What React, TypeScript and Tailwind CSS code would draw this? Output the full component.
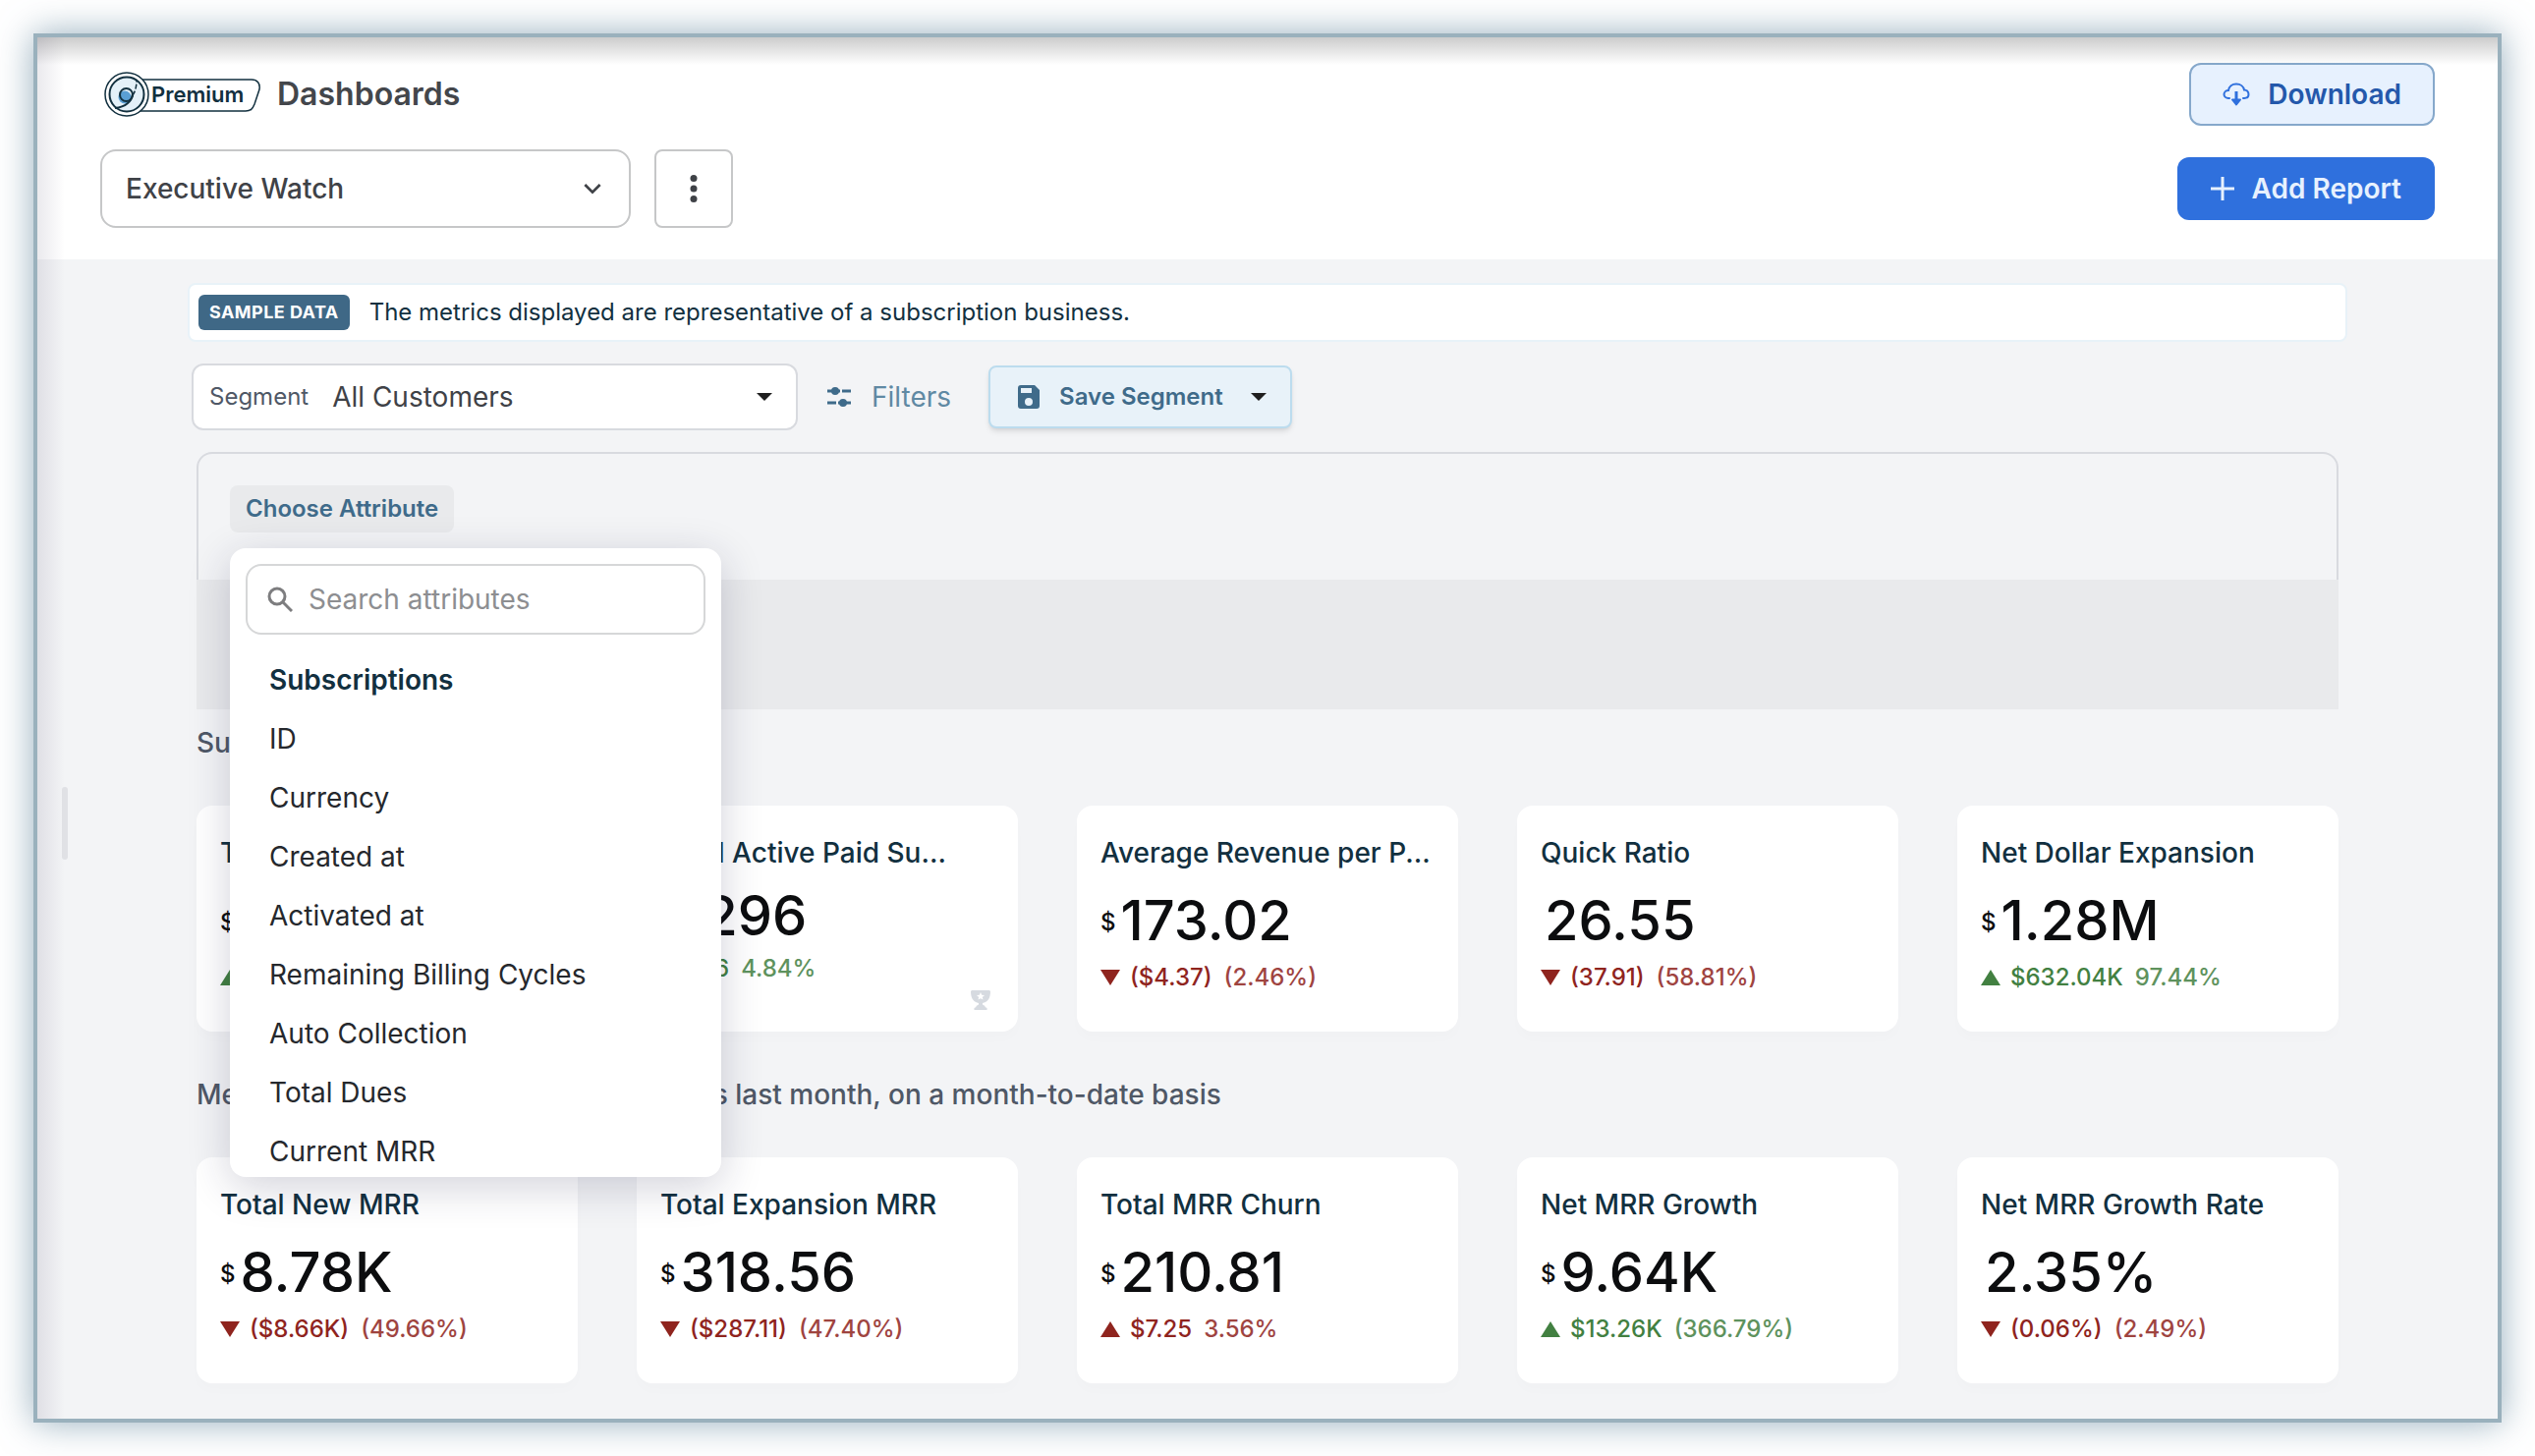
import React, { useState } from 'react';
import clsx from 'clsx';

type Tone = 'good' | 'bad';

interface Metric {
  title: string;
  value: string;
  currency?: boolean;
  change: string;
  percent: string;
  direction: 'up' | 'down';
  tone: Tone;
  goal?: boolean;
}

const subscriptionMetrics: Metric[] = [
  { title: 'Total MRR', value: '51.21K', currency: true, change: '$1.18K', percent: '2.35%', direction: 'up', tone: 'good' },
  { title: 'Total Active Paid Su...', value: '1,296', change: '136', percent: '4.84%', direction: 'up', tone: 'good', goal: true },
  { title: 'Average Revenue per P...', value: '173.02', currency: true, change: '($4.37)', percent: '(2.46%)', direction: 'down', tone: 'bad' },
  { title: 'Quick Ratio', value: '26.55', change: '(37.91)', percent: '(58.81%)', direction: 'down', tone: 'bad' },
  { title: 'Net Dollar Expansion', value: '1.28M', currency: true, change: '$632.04K', percent: '97.44%', direction: 'up', tone: 'good' },
];

const monthMetrics: Metric[] = [
  { title: 'Total New MRR', value: '8.78K', currency: true, change: '($8.66K)', percent: '(49.66%)', direction: 'down', tone: 'bad' },
  { title: 'Total Expansion MRR', value: '318.56', currency: true, change: '($287.11)', percent: '(47.40%)', direction: 'down', tone: 'bad' },
  { title: 'Total MRR Churn', value: '210.81', currency: true, change: '$7.25', percent: '3.56%', direction: 'up', tone: 'bad' },
  { title: 'Net MRR Growth', value: '9.64K', currency: true, change: '$13.26K', percent: '(366.79%)', direction: 'up', tone: 'good' },
  { title: 'Net MRR Growth Rate', value: '2.35%', change: '(0.06%)', percent: '(2.49%)', direction: 'down', tone: 'bad' },
];

const attributes = [
  'ID',
  'Currency',
  'Created at',
  'Activated at',
  'Remaining Billing Cycles',
  'Auto Collection',
  'Total Dues',
  'Current MRR',
];

const Caret: React.FC<{ className?: string }> = ({ className }) => (
  <svg viewBox="0 0 16 8" className={clsx('h-2 w-4 shrink-0', className)} fill="#1f1f1f" aria-hidden="true">
    <path d="M0 0h16L8 8z" />
  </svg>
);

const PremiumBadge = () => (
  <div className="relative flex h-12 w-[160px] items-center pl-12">
    <svg viewBox="0 0 160 48" className="absolute inset-0 h-12 w-[160px]" fill="none" aria-hidden="true">
      <path
        d="M38 9H150C156 9 159 13 158 19L153 34C151 39 149 41 144 41H36"
        stroke="#12303f"
        strokeWidth="1.5"
      />
      <circle cx="23" cy="24" r="22" fill="#fff" stroke="#12303f" strokeWidth="1.5" />
      <circle cx="23" cy="24" r="17.5" fill="#e4f0f8" stroke="#12303f" strokeWidth="2" />
      <circle cx="21" cy="27" r="6.5" fill="#5a9fd4" />
      <circle cx="22.5" cy="24.5" r="6.5" stroke="#12303f" strokeWidth="2" />
      <path d="M29 24C28 31 22 37 11 38" stroke="#12303f" strokeWidth="2" />
      <path d="M29 25C32 21 33 15 33 10" stroke="#12303f" strokeWidth="1.5" strokeDasharray="5 2" />
    </svg>
    <span className="relative text-[22px] leading-8 font-semibold text-[#12303f]">Premium</span>
  </div>
);

const PageHeader = () => (
  <header className="flex flex-col gap-6 bg-white px-16 pt-[26px] pb-8">
    <div className="flex h-16 items-center justify-between">
      <div className="flex items-center gap-4 pl-1">
        <PremiumBadge />
        <h1 className="text-[32px] leading-10 font-semibold text-[#43464b]">Dashboards</h1>
      </div>
      <button
        type="button"
        className="flex h-16 items-center gap-[18px] rounded-xl border-2 border-[#86a8cb] bg-[#e7f1fe] px-8 text-[28px] font-semibold text-[#2458ab]"
      >
        <svg viewBox="0 0 28 24" className="h-6 w-7" fill="none" stroke="#2f70dd" strokeWidth="2" aria-hidden="true">
          <path d="M7 16H6C3.500 16 1.500 14.200 1.500 12S3.500 8 6 8C6.500 4 9.800 1.500 14 1.500S21.500 4 22 7.500C24.500 7.500 26.500 9.500 26.500 12S24.500 16 22 16H21" strokeLinecap="round" />
          <path d="M14 9v8" strokeWidth="3" />
          <path d="M10 17.500h8l-4 5z" fill="#2f70dd" strokeLinejoin="round" />
        </svg>
        Download
      </button>
    </div>
    <div className="flex h-20 items-center justify-between">
      <div className="flex items-center gap-6">
        <div className="relative w-[540px]">
          <select
            aria-label="Dashboard"
            className="h-20 w-full appearance-none rounded-2xl border-2 border-[#c6c7c8] bg-white px-6 text-[28px] font-medium text-[#3f4247]"
          >
            <option>Executive Watch</option>
          </select>
          <svg viewBox="0 0 20 12" className="pointer-events-none absolute top-[34px] right-[30px] h-3 w-[18px]" fill="none" stroke="#3f4247" strokeWidth="3" aria-hidden="true">
            <path d="M1.500 1.500L10 10l8.500-8.500" />
          </svg>
        </div>
        <button
          type="button"
          aria-label="More options"
          className="flex h-20 w-20 items-center justify-center rounded-lg border-2 border-[#c6c7c8]"
        >
          <svg viewBox="0 0 8 28" className="h-7 w-2" fill="#3f4247" aria-hidden="true">
            <circle cx="4" cy="3.5" r="3.5" />
            <circle cx="4" cy="14" r="3.5" />
            <circle cx="4" cy="24.5" r="3.5" />
          </svg>
        </button>
      </div>
      <button
        type="button"
        className="flex h-16 items-center gap-[18px] rounded-xl bg-[#2f70dd] px-[34px] text-[28px] font-semibold text-[#e7f1fe]"
      >
        <svg viewBox="0 0 24 24" className="h-6 w-6" stroke="#e7f1fe" strokeWidth="3" aria-hidden="true">
          <path d="M12 0v24M0 12h24" />
        </svg>
        Add Report
      </button>
    </div>
  </header>
);

const SegmentBar = () => (
  <div className="flex items-center pl-1">
    <div className="relative flex h-[68px] w-[617px] items-center rounded-xl border-2 border-[#d8dadf] bg-white">
      <label htmlFor="segment" className="pl-4 text-2xl text-[#4f5866]">
        Segment
      </label>
      <select id="segment" className="h-full flex-1 appearance-none bg-transparent pl-6 text-[28px] text-[#3f4247]">
        <option>All Customers</option>
      </select>
      <Caret className="pointer-events-none absolute right-6" />
    </div>
    <button type="button" className="ml-[30px] flex items-center gap-[21px] text-[28px] text-[#6089a3]">
      <svg viewBox="0 0 24 24" className="h-6 w-6" fill="#3f6b8a" stroke="#3f6b8a" strokeWidth="3" aria-hidden="true">
        <path d="M0 6h13M15 6h9M0 18h9M11 18h13" />
        <circle cx="8" cy="6" r="3" strokeWidth="2" />
        <circle cx="16" cy="18" r="3" strokeWidth="2" />
      </svg>
      Filters
    </button>
    <button
      type="button"
      className="ml-[38px] flex h-16 items-center rounded-lg border-2 border-[#bcdcee] bg-[#e8f2f9] px-6 text-2xl font-semibold text-[#3f6b8a] shadow-md"
    >
      <svg viewBox="0 0 22 24" className="ml-1 h-6 w-[22px]" fill="#3f6b8a" aria-hidden="true">
        <path
          fillRule="evenodd"
          d="M3 0h14l5 5v16a3 3 0 0 1-3 3H3a3 3 0 0 1-3-3V3a3 3 0 0 1 3-3zM3 3v5h11V3zM11 13a4 4 0 1 0 0 8 4 4 0 0 0 0-8z"
        />
      </svg>
      <span className="ml-5">Save Segment</span>
      <Caret className="ml-7" />
    </button>
  </div>
);

const AttributeMenu = () => {
  const [query, setQuery] = useState('');
  const shown = attributes.filter((name) => name.toLowerCase().includes(query.toLowerCase()));

  return (
    <div className="absolute top-full left-0 z-10 mt-4 h-[640px] w-[500px] overflow-hidden rounded-2xl bg-white p-4 shadow-[0_10px_44px_rgba(30,30,70,0.2)]">
      <div className="flex h-[72px] items-center gap-4 rounded-2xl border-2 border-[#d6d7d8] px-5">
        <svg viewBox="0 0 26 26" className="h-[26px] w-[26px] shrink-0" fill="none" stroke="#7d7d7f" strokeWidth="3" aria-hidden="true">
          <circle cx="10" cy="10" r="8" />
          <path d="M16 16l9 9" />
        </svg>
        <input
          type="text"
          aria-label="Search attributes"
          placeholder="Search attributes"
          value={query}
          onChange={(e) => setQuery(e.target.value)}
          className="w-full min-w-0 text-[28px] outline-none placeholder:text-[#8d8e91]"
        />
      </div>
      <h3 className="mt-4 flex h-[60px] items-center px-6 text-[28px] font-semibold text-[#12303f]">Subscriptions</h3>
      <ul>
        {shown.map((name) => (
          <li key={name}>
            <button type="button" className="flex h-[60px] w-full items-center px-6 text-[28px] text-[#25282d]">
              {name}
            </button>
          </li>
        ))}
      </ul>
    </div>
  );
};

const MetricCard: React.FC<{ metric: Metric }> = ({ metric }) => (
  <article className="relative h-[230px] rounded-2xl bg-white px-6 pt-[30px] shadow-[0_8px_12px_rgba(0,0,0,0.01)]">
    <h3 className="truncate text-[28px] leading-9 font-medium text-[#12303f]">{metric.title}</h3>
    <div className={clsx('flex items-center gap-[5px] text-[#0c0d0f]', metric.goal ? 'mt-3.5' : 'mt-[19px]')}>
      {metric.currency && <span className="pt-1 text-2xl font-medium">$</span>}
      <span className={clsx('text-[56px] leading-16 font-medium', !metric.currency && 'pl-1')}>{metric.value}</span>
    </div>
    <div
      className={clsx(
        'flex items-center text-2xl leading-8 font-medium',
        metric.goal ? 'mt-1.5' : 'mt-2.5',
        metric.tone === 'good' ? 'text-[#428041]' : 'text-[#8f241e]'
      )}
    >
      <svg viewBox="0 0 20 16" className="h-4 w-5" fill="currentColor" aria-hidden="true">
        {metric.direction === 'up' ? <path d="M0 16h20L10 0z" /> : <path d="M0 0h20L10 16z" />}
      </svg>
      <span className="ml-2.5">{metric.change}</span>
      <span className="ml-3 opacity-85">{metric.percent}</span>
    </div>
    {metric.goal && (
      <svg viewBox="0 0 20 20" className="absolute right-7 bottom-[22px] h-5 w-5" fill="#d6dae0" aria-hidden="true">
        <path
          fillRule="evenodd"
          d="M1 0h18l1 1c0 6-2 11-8 12v1.500l2.500 1.500v1l2 1v2h-13v-2l2-1v-1L8 14.500V13C2 12 0 7 0 1zM10 2L8.800 4.800 6 5l2.200 1.900L7.500 9.600 10 8.200l2.500 1.400-.7-2.700L14 5l-2.800-.2z"
        />
      </svg>
    )}
  </article>
);

const MetricSection: React.FC<{ title: string; metrics: Metric[] }> = ({ title, metrics }) => (
  <section className="flex flex-col gap-[46px]">
    <h2 className="text-[28px] leading-9 font-medium text-[#4f5866]">{title}</h2>
    <div className="grid grid-cols-5 gap-[60px]">
      {metrics.map((metric) => (
        <MetricCard key={metric.title} metric={metric} />
      ))}
    </div>
  </section>
);

export default function App() {
  return (
    <div className="flex min-h-screen bg-white p-[34px] font-['Inter',sans-serif]">
      <div className="relative flex flex-1 flex-col border-4 border-[#9ab1bd] shadow-[0_0_34px_rgba(80,120,145,0.6)]">
        <PageHeader />
        <main className="flex-1 bg-[#f3f4f6] px-[153px] pt-6 pb-9">
          <div className="flex flex-col gap-[22px]">
            <div className="flex h-[60px] items-center gap-5 rounded-lg border-2 border-[#e8f2f8] bg-white px-[9px]">
              <span className="flex h-9 items-center rounded-md bg-[#3f6886] px-[11px] text-lg font-bold tracking-wide text-white">
                SAMPLE DATA
              </span>
              <p className="text-2xl text-[#12303f]">
                The metrics displayed are representative of a subscription business.
              </p>
            </div>
            <SegmentBar />
            <div className="px-[9px]">
              <div className="h-[130px] rounded-t-2xl border-2 border-b-0 border-[#d8dadf] px-8 pt-8">
                <div className="relative w-fit">
                  <button
                    type="button"
                    aria-expanded="true"
                    className="flex h-12 items-center rounded-lg bg-[#e9eaec] px-4 text-2xl font-semibold text-[#3f6b8a]"
                  >
                    Choose Attribute
                  </button>
                  <AttributeMenu />
                </div>
              </div>
              <div className="h-[132px] bg-[#e9eaec]" />
              <div className="mt-4 flex flex-col gap-[46px]">
                <MetricSection title="Subscription metrics" metrics={subscriptionMetrics} />
                <MetricSection title="Metrics tracked for the current month vs last month, on a month-to-date basis" metrics={monthMetrics} />
              </div>
            </div>
          </div>
        </main>
        {/* soft edge along the top and left of the frame */}
        <div className="pointer-events-none absolute inset-x-0 top-0 h-7 bg-linear-to-b from-black/20 to-transparent" />
        <div className="pointer-events-none absolute inset-y-0 left-0 w-7 bg-linear-to-r from-[#322850]/10 to-transparent" />
        <button
          type="button"
          aria-label="Resize sidebar"
          className="absolute top-[763px] left-[25px] h-[74px] w-1.5 rounded-full bg-[#e0e1e5]"
        />
      </div>
    </div>
  );
}
